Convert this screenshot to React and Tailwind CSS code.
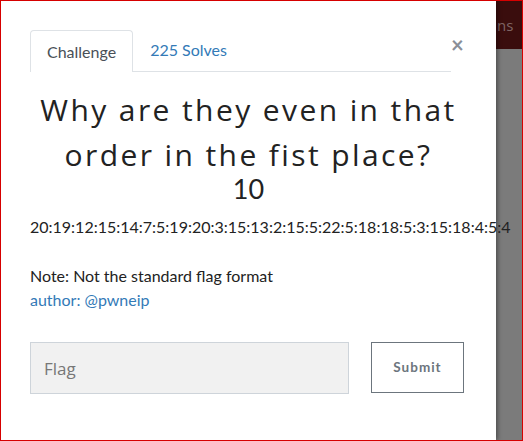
import React, { useState } from 'react';

const App = () => {
  const [flag, setFlag] = useState('');

  return (
    <div className="w-[523px] h-[441px] border border-[#d60000] flex overflow-hidden bg-white" style={{ fontFamily: 'Lato, "Liberation Sans", sans-serif' }}>
      {/* 모달 본문 */}
      <div className="w-[495px] shrink-0 bg-white relative z-10 shadow-[2px_0_4px_rgba(0,0,0,0.35)]">
        <div className="pl-[29px] pr-[45px] pt-[29px]">
          <div className="flex items-end border-b border-[#dee2e6] h-[42px]">
            <div className="h-[42px] px-[16px] flex items-center border border-b-0 border-[#dee2e6] rounded-t-[4px] bg-white -mb-px text-[16px] text-[#495057]">
              Challenge
            </div>
            <div className="h-[42px] px-[17px] flex items-center text-[16px] text-[#337ab7]">225 Solves</div>
          </div>
        </div>
        <button className="absolute left-[450px] top-[33px] text-[#8a8f98] text-[22px] leading-none font-bold">×</button>

        <h1 className="mt-[15px] text-center text-[#222] text-[30px] leading-[45px] font-normal tracking-[2.4px] px-[8px]" style={{ fontFamily: '"Open Sans", Lato, sans-serif' }}>
          Why are they even in that order in the fist place?
        </h1>
        <div className="text-center text-[27px] leading-[22px] text-[#222] mt-[1px]">10</div>
        <div className="pl-[29px] mt-[17px] text-[16px] leading-[20px] text-[#222] whitespace-nowrap">
          20:19:12:15:14:7:5:19:20:3:15:13:2:15:5:22:5:18:18:5:3:15:18:4:5:4
        </div>

        <div className="pl-[29px] mt-[27px] text-[16px] leading-[24px] text-[#222]">Note: Not the standard flag format</div>
        <div className="pl-[29px] text-[16px] leading-[24px] text-[#337ab7]">author: @pwneip</div>

        <div className="pl-[29px] mt-[30px] flex gap-[22px]">
          <input
            value={flag}
            onChange={(e) => setFlag(e.target.value)}
            placeholder="Flag"
            className="w-[319px] h-[52px] px-[13px] bg-[#f1f1f1] border border-[#ced4da] text-[17px] text-[#495057] placeholder:text-[#777] outline-none bg-[radial-gradient(#d9d9d9_0.6px,transparent_0.6px)] bg-[length:6px_6px]"
            style={{ fontFamily: '"Open Sans", "Liberation Sans", sans-serif' }}
          />
          <button className="w-[93px] h-[51px] border border-[#6c757d] text-[#6c757d] text-[13.5px] font-bold tracking-[1px] bg-white">
            Submit
          </button>
        </div>
      </div>

      {/* 배경 */}
      <div className="flex-1 flex flex-col">
        <div className="h-[48px] bg-[#3a0d0d] flex items-center overflow-hidden pl-[1px]">
          <span className="text-[#7f6565] text-[15px]" style={{ fontFamily: '"Open Sans", sans-serif' }}>ns</span>
        </div>
        <div className="flex-1 bg-[#7b7b7b]"></div>
      </div>
    </div>
  );
};

export default App;
